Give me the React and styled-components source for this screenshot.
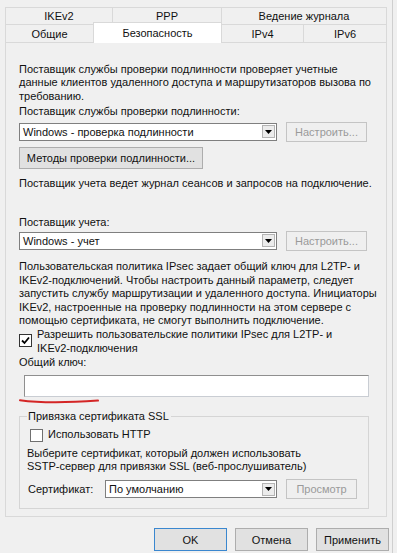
import React from 'react';
import styled, { createGlobalStyle } from 'styled-components';

const Global = createGlobalStyle`
  html, body { margin: 0; padding: 0; background: #f0f0f0; }
  body {
    font-family: "Liberation Sans", Arial, sans-serif;
    font-size: 11px;
    color: #111;
  }
`;

const Window = styled.div`
  width: 397px;
  height: 553px;
  box-sizing: border-box;
  padding: 7px 0 0 5px;
  display: flex;
  flex-direction: column;
  background: #f0f0f0;
  box-shadow: inset -4px 0 0 #f0f0f0, inset -5px 0 0 #cfcfcf;
  overflow: hidden;
`;

const TabStrip = styled.div`
  width: 382px;
  display: flex;
  flex-direction: column;
`;

const TabRow = styled.div`
  display: flex;
  align-items: flex-end;
  height: ${(p) => p.$h}px;
`;

const Tab = styled.div`
  box-sizing: border-box;
  width: ${(p) => p.$w}px;
  height: 100%;
  border-top: 1px solid #d9d9d9;
  border-left: 1px solid #d9d9d9;
  border-right: ${(p) => (p.$last ? '1px solid #d9d9d9' : 'none')};
  background: #f0f0f0;
  display: flex;
  align-items: center;
  justify-content: center;
  white-space: nowrap;
`;

const ActiveTab = styled.div`
  box-sizing: border-box;
  width: ${(p) => p.$w}px;
  height: 21px;
  margin: 0 -1px -1px 0;
  border: 1px solid #d9d9d9;
  border-bottom: none;
  background: #ffffff;
  position: relative;
  z-index: 1;
  display: flex;
  align-items: center;
  justify-content: center;
  padding-bottom: 1px;
  white-space: nowrap;
`;

const Panel = styled.div`
  box-sizing: border-box;
  width: 382px;
  height: 475px;
  border: 1px solid #d9d9d9;
  background: #f0f0f0;
  padding: 20px 0 0 13px;
  display: flex;
  flex-direction: column;
  align-items: flex-start;
`;

const Text = styled.p`
  margin: ${(p) => p.$mt || 0}px 0 0 0;
  line-height: 13.4px;
  white-space: nowrap;
`;

const Row = styled.div`
  display: flex;
  align-items: center;
  gap: ${(p) => p.$gap || 0}px;
  margin-top: ${(p) => p.$mt || 0}px;
  height: ${(p) => (p.$h ? `${p.$h}px` : 'auto')};
`;

const Combo = styled.div`
  box-sizing: border-box;
  width: ${(p) => p.$w}px;
  height: 18px;
  display: flex;
  align-items: center;
  background: #fff;
  border: 1px solid #7f7f7f;
  padding-left: 3px;
`;

const ComboText = styled.span`
  flex: 1;
  white-space: nowrap;
  line-height: 14px;
`;

const ComboArrow = styled.span`
  box-sizing: border-box;
  width: 13px;
  height: 13px;
  margin-right: 1px;
  border: 1px solid #b4b4b4;
  background: #ececec;
  display: flex;
  align-items: center;
  justify-content: center;
`;

const Button = styled.button`
  box-sizing: border-box;
  width: ${(p) => p.$w}px;
  height: ${(p) => p.$h || 22}px;
  padding: 0;
  margin: 0 0 0 ${(p) => p.$ml || 0}px;
  font: inherit;
  border: 1px solid
    ${(p) => (p.$primary ? '#3a87cf' : p.disabled ? '#c4c4c4' : '#adadad')};
  background: ${(p) => (p.disabled ? '#efefef' : '#e1e1e1')};
  color: ${(p) => (p.disabled ? '#9a9a9a' : '#111')};
  white-space: nowrap;
`;

const CheckRow = styled.div`
  display: flex;
  align-items: flex-start;
  gap: ${(p) => p.$gap}px;
  margin-top: ${(p) => p.$mt || 0}px;
  margin-left: ${(p) => p.$ml || 0}px;
`;

const Box = styled.span`
  box-sizing: border-box;
  flex: none;
  width: 13px;
  height: 13px;
  margin-top: ${(p) => p.$off}px;
  border: 1px solid ${(p) => (p.$checked ? '#333' : '#707070')};
  background: #fff;
  display: flex;
  align-items: center;
  justify-content: center;
`;

const FieldWrap = styled.div`
  position: relative;
  margin: 5px 0 0 5px;
`;

const Field = styled.div`
  box-sizing: border-box;
  width: 345px;
  height: 22px;
  background: #fff;
  border: 1px solid #c9cdd3;
  border-top-color: #8f8f8f;
  border-left-color: #8f8f8f;
`;

const Scribble = styled.svg`
  position: absolute;
  left: -5px;
  top: 100%;
  margin-top: 1px;
`;

const Group = styled.fieldset`
  box-sizing: border-box;
  width: 350px;
  margin: 13px 0 0 0;
  padding: 0 7px 8px 7px;
  border: 1px solid #d5d5d5;
  min-inline-size: 0;
`;

const Legend = styled.legend`
  padding: 0 2px 0 1px;
  line-height: 13.4px;
`;

const LabelCell = styled.span`
  width: ${(p) => p.$w}px;
  padding-left: 1px;
  box-sizing: border-box;
  white-space: nowrap;
`;

const Footer = styled.div`
  display: flex;
  justify-content: flex-end;
  gap: 8px;
  margin-top: 11px;
  padding-right: 8px;
`;

const Arrow = () => (
  <svg width="7" height="4" viewBox="0 0 7 4">
    <path d="M0 0 H7 L3.5 4 Z" fill="#000" />
  </svg>
);

const Check = () => (
  <svg width="9" height="9" viewBox="0 0 9 9">
    <path d="M1 4.5 L3.5 7 L8 1.5" stroke="#000" strokeWidth="1.8" fill="none" />
  </svg>
);

const ComboBox = ({ w, children }) => (
  <Combo $w={w}>
    <ComboText>{children}</ComboText>
    <ComboArrow>
      <Arrow />
    </ComboArrow>
  </Combo>
);

export default function App() {
  return (
    <>
      <Global />
      <Window>
        <TabStrip>
          <TabRow $h={17}>
            <Tab $w={107}>IKEv2</Tab>
            <Tab $w={109}>PPP</Tab>
            <Tab $w={166} $last>Ведение журнала</Tab>
          </TabRow>
          <TabRow $h={18}>
            <Tab $w={88}>Общие</Tab>
            <ActiveTab $w={129}>Безопасность</ActiveTab>
            <Tab $w={82}>IPv4</Tab>
            <Tab $w={84} $last>IPv6</Tab>
          </TabRow>
        </TabStrip>
        <Panel>
          <Text>
            Поставщик службы проверки подлинности проверяет учетные
            <br />
            данные клиентов удаленного доступа и маршрутизаторов вызова по
            <br />
            требованию.
          </Text>
          <Text $mt={1.5}>Поставщик службы проверки подлинности:</Text>
          <Row $mt={3} $gap={9} $h={21}>
            <ComboBox w={258}>Windows - проверка подлинности</ComboBox>
            <Button $w={81} $h={20} disabled>Настроить...</Button>
          </Row>
          <Row $mt={5}>
            <Button $w={184} $h={22}>Методы проверки подлинности...</Button>
          </Row>
          <Text $mt={8}>Поставщик учета ведет журнал сеансов и запросов на подключение.</Text>
          <Text $mt={25.5}>Поставщик учета:</Text>
          <Row $mt={1} $gap={9} $h={21}>
            <ComboBox w={258}>Windows - учет</ComboBox>
            <Button $w={81} $h={20} disabled>Настроить...</Button>
          </Row>
          <Text $mt={9}>
            Пользовательская политика IPsec задает общий ключ для L2TP- и
            <br />
            IKEv2-подключений. Чтобы настроить данный параметр, следует
            <br />
            запустить службу маршрутизации и удаленного доступа. Инициаторы
            <br />
            IKEv2, настроенные на проверку подлинности на этом сервере с
            <br />
            помощью сертификата, не смогут выполнить подключение.
          </Text>
          <CheckRow $mt={1} $gap={5}>
            <Box $checked $off={6}>
              <Check />
            </Box>
            <Text>
              Разрешить пользовательские политики IPsec для L2TP- и
              <br />
              IKEv2-подключения
            </Text>
          </CheckRow>
          <Text $mt={1}>Общий ключ:</Text>
          <FieldWrap>
            <Field />
            <Scribble width="82" height="6" viewBox="0 0 82 6">
              <path
                d="M1 2.2 C 20 4.8, 50 4.6, 79 2.6"
                stroke="#d42626"
                strokeWidth="2"
                strokeLinecap="round"
                fill="none"
              />
            </Scribble>
          </FieldWrap>
          <Group>
            <Legend>Привязка сертификата SSL</Legend>
            <CheckRow $mt={5} $gap={5} $ml={3}>
              <Box $off={1}></Box>
              <Text>Использовать HTTP</Text>
            </CheckRow>
            <Text $mt={4.7}>
              Выберите сертификат, который должен использовать
              <br />
              SSTP-сервер для привязки SSL (веб-прослушиватель)
            </Text>
            <Row $mt={5.4} $h={21}>
              <LabelCell $w={78}>Сертификат:</LabelCell>
              <ComboBox w={172}>По умолчанию</ComboBox>
              <Button $w={71} $h={20} $ml={9} disabled>
                Просмотр
              </Button>
            </Row>
          </Group>
        </Panel>
        <Footer>
          <Button $w={73} $h={23} $primary>OK</Button>
          <Button $w={73} $h={23}>Отмена</Button>
          <Button $w={73} $h={23}>Применить</Button>
        </Footer>
      </Window>
    </>
  );
}
